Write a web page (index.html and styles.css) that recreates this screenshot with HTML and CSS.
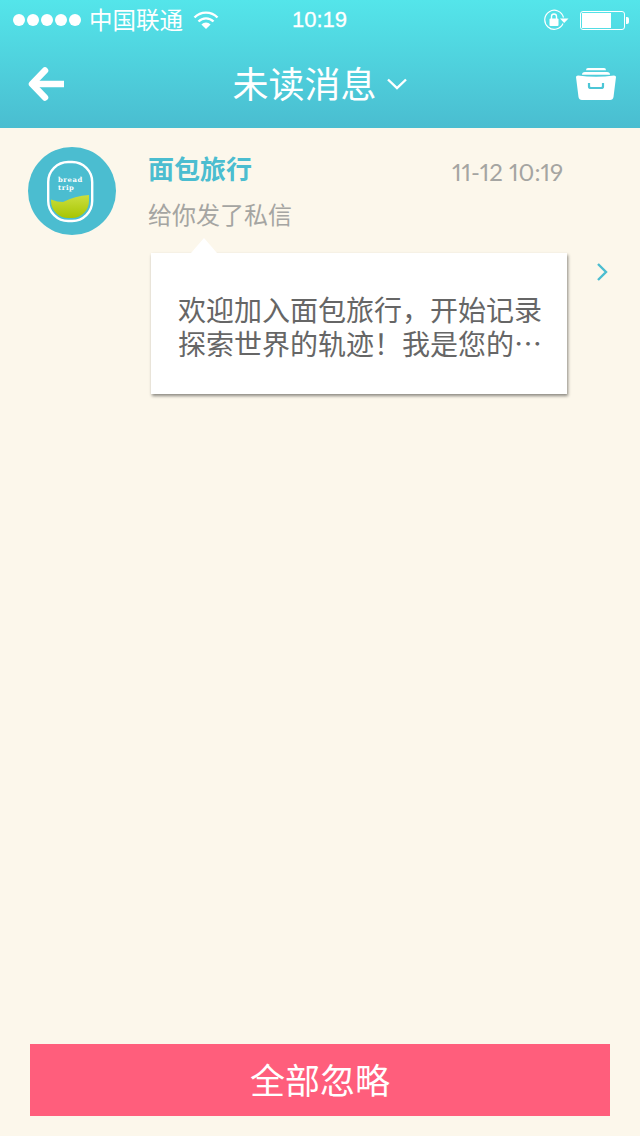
FILE: index.html
```html
<!DOCTYPE html>
<html lang="zh-CN">
<head>
  <meta charset="UTF-8">
  <title>未读消息</title>
  <link rel="stylesheet" href="styles.css">
</head>
<body>
  <div class="screen">
    <header class="top-bar">
      <div class="status-bar">
        <div class="status-left">
          <div class="signal">
            <span></span><span></span><span></span><span></span><span></span>
          </div>
          <span class="carrier">中国联通</span>
          <svg class="wifi" width="26" height="20" viewBox="0 0 26 20">
            <path d="M1.5 7.5 A16 16 0 0 1 24.5 7.5" fill="none" stroke="#fff" stroke-width="2.4"/>
            <path d="M5.5 11.5 A10.5 10.5 0 0 1 20.5 11.5" fill="none" stroke="#fff" stroke-width="2.4"/>
            <path d="M13 19 L8.4 14.4 A6.5 6.5 0 0 1 17.6 14.4 Z" fill="#fff"/>
          </svg>
        </div>
        <span class="clock">10:19</span>
        <div class="status-right">
          <svg class="rotation-lock" width="26" height="22" viewBox="0 0 26 22">
            <path d="M20.5 8.5 A9.5 9.5 0 1 0 20 14.5" fill="none" stroke="#fff" stroke-width="1.2"/>
            <path d="M17 9.500 H25.500 L21.200 14 Z" fill="#fff"/>
            <rect x="6.5" y="9.5" width="9" height="7.5" rx="1" fill="#fff"/>
            <path d="M8.5 10 V7.5 A2.5 2.5 0 0 1 13.5 7.5 V10" fill="none" stroke="#fff" stroke-width="1.4"/>
          </svg>
          <div class="battery">
            <div class="battery-body"><div class="battery-level"></div></div>
            <div class="battery-tip"></div>
          </div>
        </div>
      </div>
      <div class="nav-bar">
        <svg class="back" width="38" height="36" viewBox="0 0 38 36">
          <path d="M18 4.500 L5 18 L18 31.500" fill="none" stroke="#fff" stroke-width="6.500" stroke-linecap="round" stroke-linejoin="round"/>
          <path d="M6 18 H37" fill="none" stroke="#fff" stroke-width="6.500"/>
        </svg>
        <div class="nav-title">
          <span>未读消息</span>
          <svg width="20" height="12" viewBox="0 0 20 12">
            <path d="M1 1.500 L10 10 L19 1.500" fill="none" stroke="#fff" stroke-width="2.400"/>
          </svg>
        </div>
        <svg class="archive" width="40" height="32" viewBox="0 0 40 32">
          <path d="M10 2.200 Q10 0 12 0 H28 Q30 0 30 2.200 Z" fill="#fff"/>
          <path d="M6 6.800 Q6 4 9 4 H31 Q34 4 34 6.800 Z" fill="#fff"/>
          <path d="M0 9 Q0 7.500 2 7.500 Q20 10 38 7.500 Q40 7.500 40 9 L37.500 29 Q37 32 34 32 H6 Q3 32 2.500 29 Z" fill="#fff"/>
          <path d="M13 15 V18.500 Q13 20 15 20 H25 Q27 20 27 18.500 V15" fill="none" stroke="#4cc6d6" stroke-width="2.200"/>
        </svg>
      </div>
    </header>

    <main class="content">
      <div class="message">
        <div class="avatar">
          <svg width="88" height="88" viewBox="0 0 88 88">
            <defs>
              <linearGradient id="hill" x1="0" y1="0" x2="0" y2="1">
                <stop offset="0" stop-color="#cbdf3f"/>
                <stop offset="1" stop-color="#a6c400"/>
              </linearGradient>
              <clipPath id="window"><rect x="23" y="18" width="38" height="53" rx="17"/></clipPath>
            </defs>
            <circle cx="44" cy="44" r="44" fill="#4bbdd0"/>
            <g clip-path="url(#window)">
              <path d="M22 52 Q29 55 35 55 Q47 49 62 48 V72 H22 Z" fill="url(#hill)"/>
            </g>
            <rect x="20.200" y="15" width="44" height="59" rx="20" fill="none" stroke="#fff" stroke-width="2.400"/>
            <text class="avatar-text" x="30" y="34.500">bread</text>
            <text class="avatar-text" x="30" y="42.500">trip</text>
          </svg>
        </div>
        <div class="message-body">
          <div class="message-head">
            <span class="sender">面包旅行</span>
            <span class="time">11-12 10:19</span>
          </div>
          <div class="summary">给你发了私信</div>
          <div class="bubble-row">
            <div class="bubble">
              <p>欢迎加入面包旅行，开始记录探索世界的轨迹！我是您的…</p>
            </div>
            <svg class="more" width="12" height="20" viewBox="0 0 12 20">
              <path d="M2 2 L10 10 L2 18" fill="none" stroke="#4bbdd0" stroke-width="2.400"/>
            </svg>
          </div>
        </div>
      </div>
    </main>

    <div class="footer">
      <div class="ignore-btn">全部忽略</div>
    </div>
  </div>
</body>
</html>
```

FILE: styles.css
```css
body {
  margin: 0;
  font-family: "Noto Sans CJK SC", "Liberation Sans", sans-serif;
}
.screen {
  width: 640px;
  height: 1136px;
  display: flex;
  flex-direction: column;
  background: #fcf7eb;
  overflow: hidden;
}
.top-bar {
  height: 128px;
  background: linear-gradient(to bottom, #54e5ea, #4abdd0);
  color: white;
}
.status-bar {
  height: 40px;
  display: grid;
  grid-template-columns: 1fr auto 1fr;
  align-items: center;
  padding: 0 11px 0 13px;
}
.status-left {
  display: flex;
  align-items: center;
}
.signal {
  display: flex;
  gap: 2px;
}
.signal span {
  width: 12px;
  height: 12px;
  border-radius: 50%;
  background: white;
}
.carrier {
  font-size: 23.5px;
  margin-left: 8px;
  padding-bottom: 3px;
}
.wifi {
  margin-left: 10px;
}
.clock {
  font-family: "Liberation Sans", sans-serif;
  font-size: 22px;
  margin-right: 3px;
  -webkit-text-stroke: 0.3px white;
}
.status-right {
  display: flex;
  align-items: center;
  justify-content: flex-end;
  gap: 11px;
}
.battery {
  display: flex;
  align-items: center;
}
.battery-body {
  box-sizing: border-box;
  width: 45px;
  height: 19px;
  border: 1px solid white;
  border-radius: 3px;
  padding: 1px;
}
.battery-level {
  width: 29px;
  height: 15px;
  background: white;
}
.battery-tip {
  width: 3px;
  height: 7px;
  background: white;
  border-radius: 0 2px 2px 0;
  margin-left: 1px;
}
.nav-bar {
  height: 88px;
  display: flex;
  align-items: center;
  justify-content: space-between;
  padding: 0 24px 0 27px;
}
.nav-title {
  display: flex;
  align-items: center;
  gap: 10px;
  font-size: 36px;
  line-height: 44px;
  margin-right: 2px;
}
.nav-title span {
  padding-bottom: 4px;
}
.content {
  flex: 1;
}
.message {
  display: flex;
  padding: 19px 0 0 28px;
}
.avatar {
  width: 88px;
  height: 88px;
}
.avatar-text {
  font-family: "DejaVu Serif", serif;
  font-size: 6.8px;
  letter-spacing: 0.6px;
  font-weight: bold;
  fill: white;
}
.message-body {
  width: 491px;
  margin-left: 32px;
}
.message-head {
  display: flex;
  justify-content: space-between;
  align-items: center;
  height: 46px;
  padding-right: 76px;
}
.sender {
  font-size: 26px;
  line-height: 38px;
  margin-bottom: 4px;
  font-weight: bold;
  color: #4bbdd0;
}
.time {
  font-family: Lato, sans-serif;
  font-size: 24px;
  font-variant-numeric: proportional-nums;
  color: #a5a5a2;
  margin-top: 2px;
}
.summary {
  font-size: 24px;
  line-height: 34px;
  color: #a5a5a2;
  margin-top: 4px;
}
.bubble-row {
  display: flex;
  align-items: flex-start;
  margin-top: 22px;
  margin-left: 3px;
}
.bubble {
  flex-shrink: 0;
  width: 416px;
  height: 141px;
  box-sizing: border-box;
  padding: 39px 24px 0 27px;
  background: white;
  box-shadow: 1px 2px 3px rgba(0,0,0,0.45);
  position: relative;
}
.bubble:before {
  content: "";
  position: absolute;
  left: 40px;
  top: -15px;
  border-left: 13px solid transparent;
  border-right: 13px solid transparent;
  border-bottom: 15px solid white;
}
.bubble p {
  margin: 0;
  font-size: 28px;
  line-height: 34px;
  color: #666;
}
.more {
  margin: 9px 0 0 29px;
}
.footer {
  padding: 0 30px 20px;
}
.ignore-btn {
  height: 72px;
  line-height: 70px;
  background: #ff5e7c;
  color: white;
  font-size: 35px;
  text-align: center;
}
```
